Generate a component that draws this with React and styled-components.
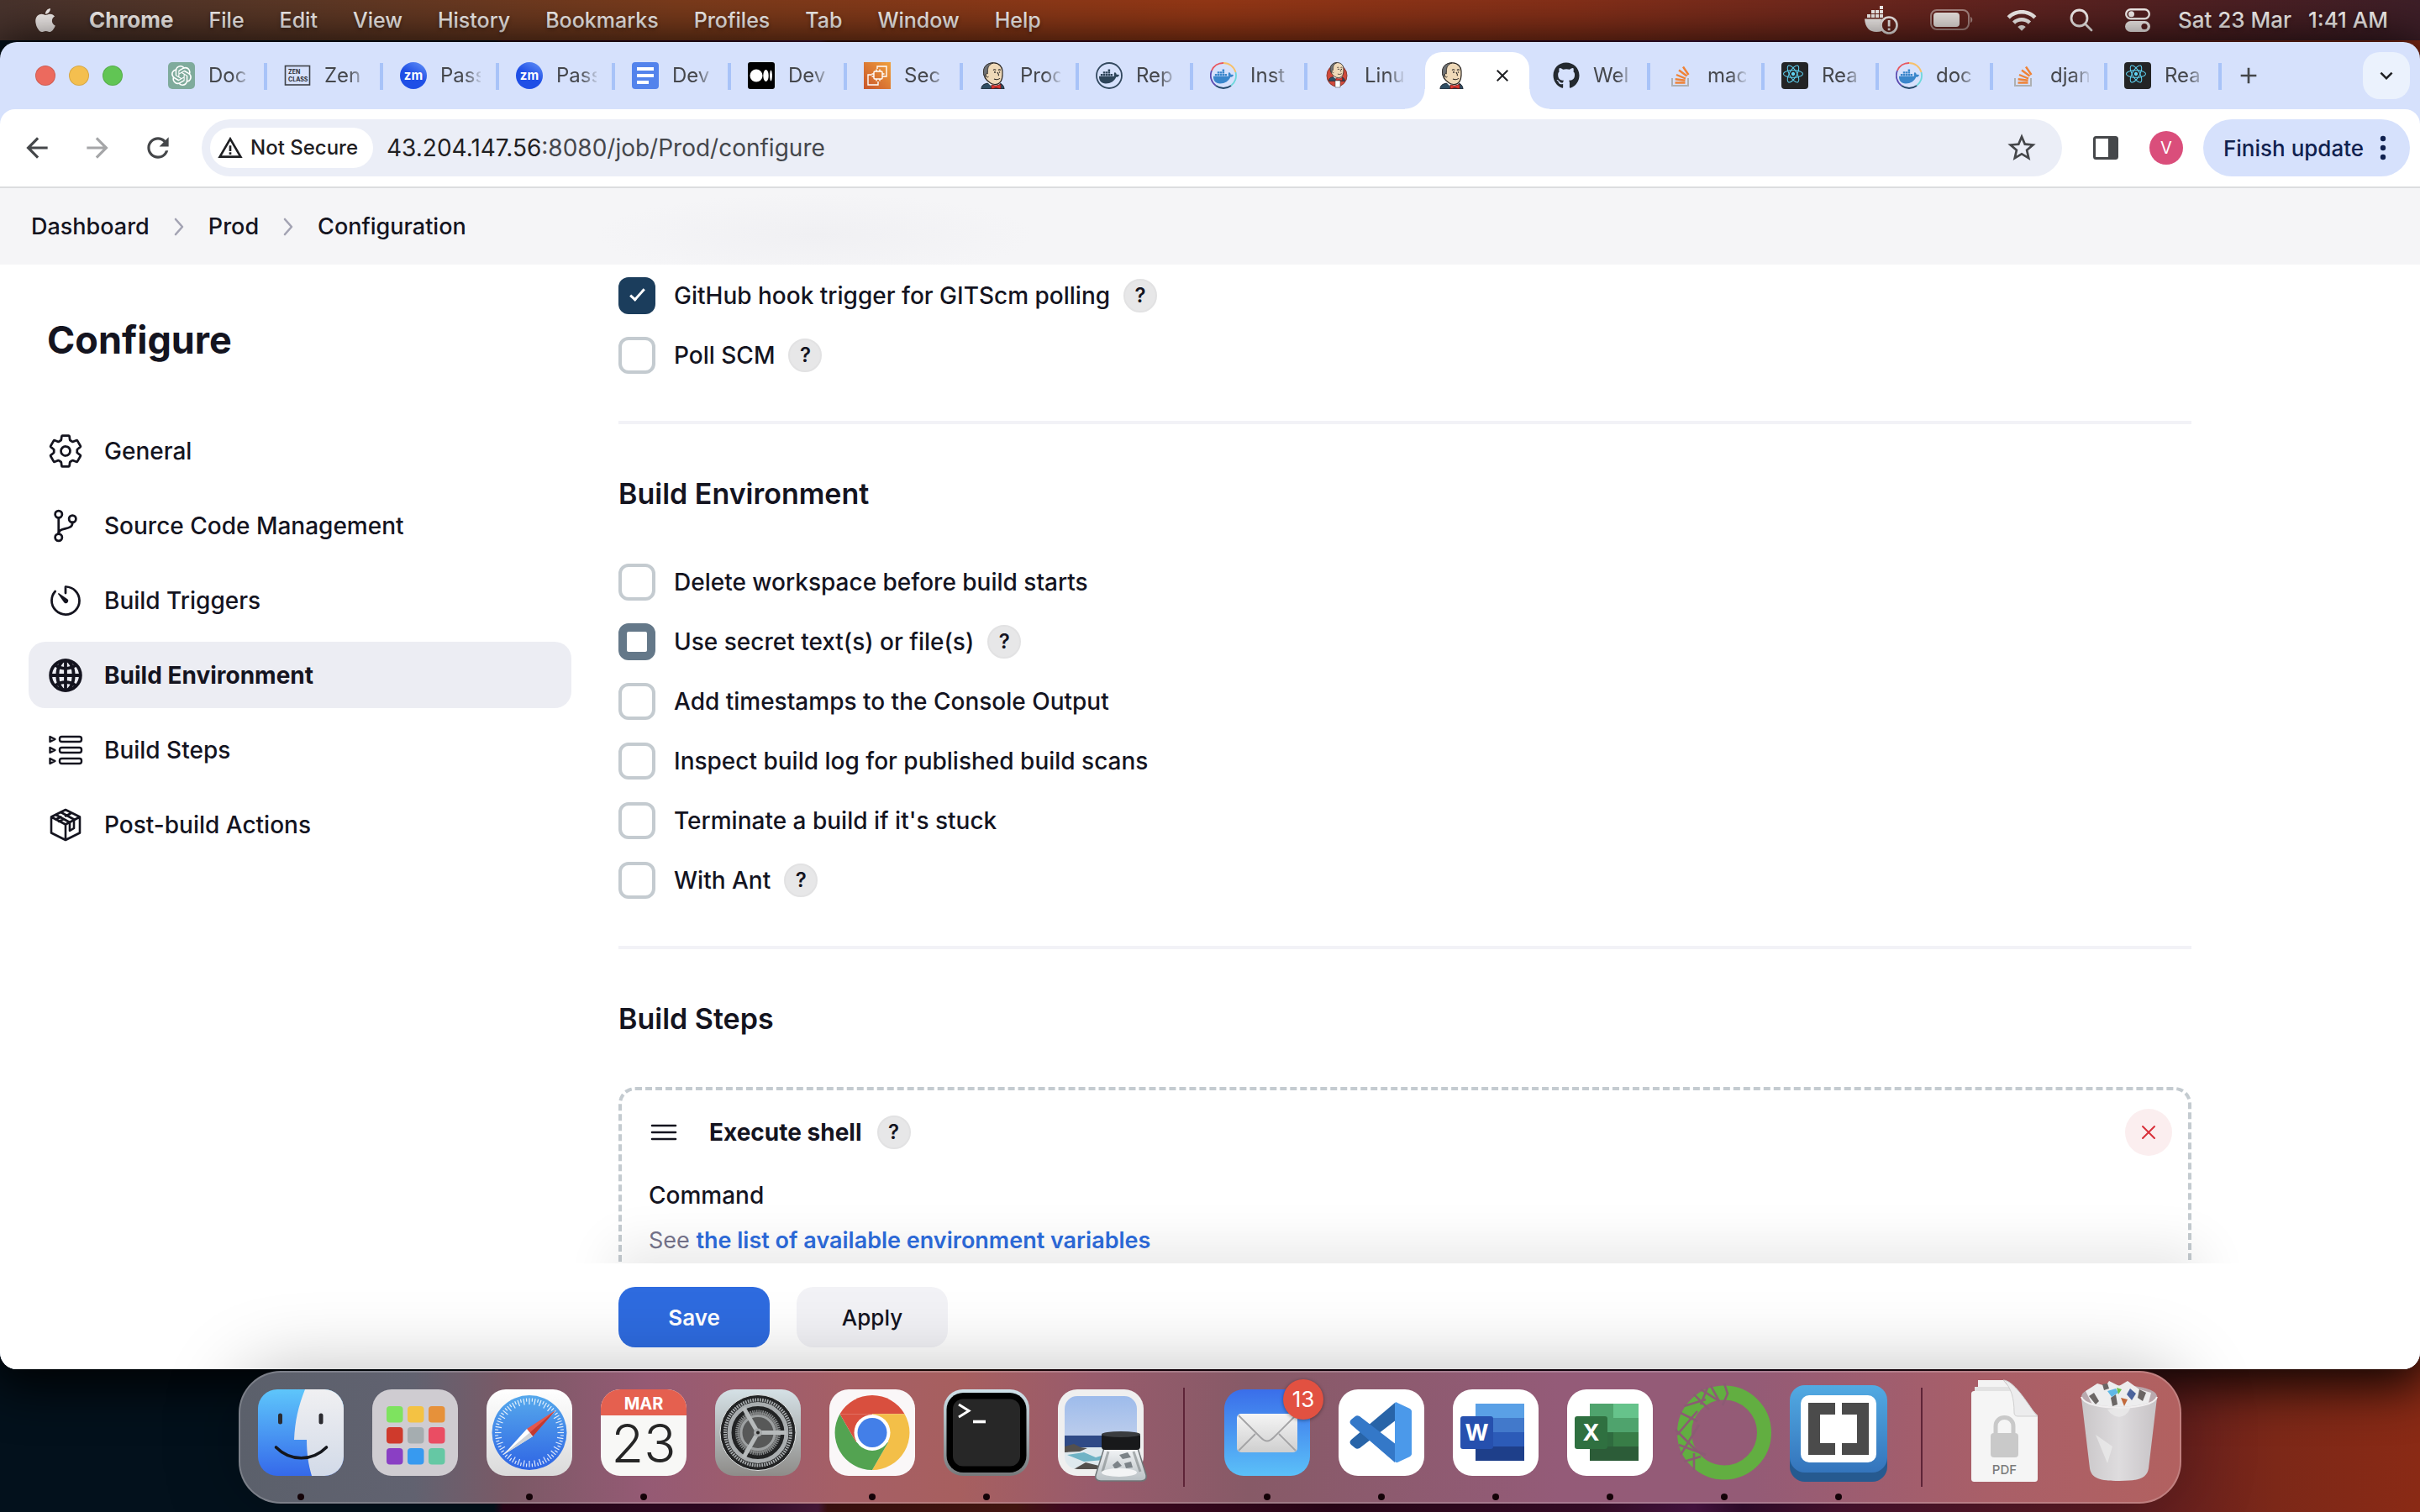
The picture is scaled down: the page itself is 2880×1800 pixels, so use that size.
import React from "react";
import styled, { createGlobalStyle, css } from "styled-components";
import { FaApple, FaGithub, FaDocker, FaReact } from "react-icons/fa";
import { SiOpenai } from "react-icons/si";
import { MdArrowBack, MdArrowForward, MdRefresh, MdStarBorder, MdAdd, MdClose, MdWifi, MdKeyboardArrowDown, MdWarningAmber } from "react-icons/md";
import { IoSettingsOutline, IoGitBranchOutline, IoTimerOutline, IoGlobeOutline } from "react-icons/io5";

const ink = "#14141f";
const sans = `Inter, "Liberation Sans", sans-serif`;

const GlobalStyle = createGlobalStyle`
  *, *::before, *::after { box-sizing: border-box; }
  body { margin: 0; font-family: ${sans}; color: ${ink}; background: #03111c; }
  button, input { font: inherit; color: inherit; margin: 0; }
  button { border: 0; padding: 0; background: none; cursor: pointer; }
  a { color: inherit; text-decoration: none; }
  h1, h2, h3, p, ul, ol { margin: 0; padding: 0; }
  ul, ol { list-style: none; }
  svg { display: block; flex: none; }
`;

/* ---------- desktop and menu bar ---------- */

const Desktop = styled.div`
  display: flex;
  flex-direction: column;
  height: 100vh;
  padding-bottom: 10px;
  overflow: hidden;
  background:
    linear-gradient(90deg, #03111c 0%, #03111c 20.4%, #2a0419 20.8%, #330a26 30%, #4b1a3d 33.8%, #3f1210 34.2%, #4a1812 42%, #480a25 44%, #2c0519 55%, #3a0d2a 66%, #4a1545 70%, #330c2e 72%, #4b1230 76%, #601d22 88%, #7c2818 94%, #8a2a15 100%);
`;

const MenuBar = styled.header`
  display: flex;
  align-items: center;
  flex: none;
  height: 48px;
  margin-bottom: 2px;
  padding: 0 38px;
  font-size: 26px;
  line-height: 32px;
  font-weight: 500;
  color: #fbf6f4;
  text-shadow: 0 2px 4px rgba(0, 0, 0, 0.35);
  background: linear-gradient(90deg, #48332d 0%, #5c3826 12%, #7c3c1c 28%, #963816 50%, #863019 65%, #67251f 80%, #4d2023 92%, #3e1f28 100%);
`;

const MenuList = styled.nav`
  display: flex;
  align-items: center;
  gap: 42px;
  margin-left: 36px;
  font-size: 25px;
  strong { font-size: 26px; font-weight: 700; }
`;

const StatusList = styled.div`
  display: flex;
  align-items: center;
  gap: 38px;
  margin-left: auto;
`;

const Clock = styled.time`
  display: flex;
  gap: 20px;
  margin-left: -5px;
`;

/* ---------- browser window ---------- */

const Browser = styled.section`
  display: flex;
  flex-direction: column;
  flex: 1;
  min-height: 0;
  margin-bottom: 2px;
  border-radius: 20px;
  overflow: hidden;
  background: #d6e1fc;
  box-shadow: 0 10px 60px 10px rgba(0, 0, 0, 0.9);
`;

const TabStrip = styled.div`
  display: flex;
  align-items: flex-end;
  flex: none;
  height: 80px;
  padding: 0 12px 0 42px;
`;

const Lights = styled.div`
  display: flex;
  align-items: center;
  gap: 16px;
  height: 80px;
  width: 138px;
  flex: none;
`;

const Light = styled.span`
  width: 24px;
  height: 24px;
  border-radius: 50%;
  border: 1px solid rgba(0, 0, 0, 0.12);
  background: ${(p) => p.$color};
`;

const Tab = styled.a`
  display: flex;
  align-items: center;
  gap: 16px;
  flex: none;
  width: ${(p) => (p.$wide ? 138 : 136)}px;
  height: 80px;
  padding: 0 22px 0 20px;
  font-size: 24px;
  line-height: 32px;
  color: #45474c;
  background: ${(p) => (p.$last ? "none" : "linear-gradient(#a8c3f8, #a8c3f8) no-repeat right 25px / 4px 32px")};
  background-size: 4px 32px;
`;

const TabLabel = styled.span`
  flex: 1;
  min-width: 0;
  overflow: hidden;
  white-space: nowrap;
  -webkit-mask-image: linear-gradient(90deg, #000 60%, rgba(0, 0, 0, 0.15) 100%);
  mask-image: linear-gradient(90deg, #000 60%, rgba(0, 0, 0, 0.15) 100%);
`;

const ActiveTab = styled.div`
  position: relative;
  display: flex;
  align-items: center;
  justify-content: space-between;
  flex: none;
  width: 124px;
  height: 68px;
  margin: 0 8px 0 4px;
  padding: 0 20px 12px 16px;
  border-radius: 20px 20px 0 0;
  background: #fff;
  &::before, &::after {
    content: "";
    position: absolute;
    bottom: 0;
    width: 24px;
    height: 24px;
  }
  &::before { right: 100%; background: radial-gradient(circle at 0 0, transparent 23px, #fff 24px); }
  &::after { left: 100%; background: radial-gradient(circle at 100% 0, transparent 23px, #fff 24px); }
`;

const IconButton = styled.button`
  display: grid;
  place-items: center;
  width: ${(p) => p.$size || 40}px;
  height: ${(p) => p.$size || 40}px;
  flex: none;
  color: ${(p) => p.$color || "#45474a"};
`;

const NewTabButton = styled(IconButton)`
  width: 64px;
  height: 80px;
`;

const TabSearch = styled(IconButton)`
  width: 56px;
  height: 56px;
  margin: 0 0 12px auto;
  border-radius: 20px;
  color: #1f2023;
  background: #ebf2fd;
`;

const Toolbar = styled.div`
  display: flex;
  align-items: center;
  flex: none;
  height: 94px;
  padding: 0 12px 0 24px;
  border-radius: 18px 18px 0 0;
  border-bottom: 2px solid #dcdddf;
  background: #fff;
`;

const NavButtons = styled.div`
  display: flex;
  gap: 32px;
  margin-right: 32px;
`;

const Address = styled.div`
  display: flex;
  align-items: center;
  flex: 1;
  height: 68px;
  margin-right: 32px;
  padding: 0 28px 0 10px;
  border-radius: 34px;
  background: #ebeef7;
`;

const SecurityChip = styled.button`
  display: flex;
  align-items: center;
  gap: 8px;
  height: 48px;
  padding: 0 18px 0 8px;
  border-radius: 24px;
  background: #fff;
  color: #1f2023;
  font-size: 24px;
  line-height: 32px;
  font-weight: 500;
`;

const Url = styled.span`
  flex: 1;
  margin-left: 16px;
  font-size: 28px;
  line-height: 36px;
  color: #45474c;
  b { font-weight: 400; color: #1f2023; }
`;

const Avatar = styled.button`
  width: 40px;
  height: 40px;
  margin: 0 24px 0 32px;
  border-radius: 50%;
  background: #da4e7b;
  color: #fff;
  font-size: 20px;
`;

const UpdateButton = styled.button`
  display: flex;
  align-items: center;
  justify-content: space-between;
  width: 246px;
  height: 68px;
  padding: 0 28px 0 24px;
  border-radius: 34px;
  background: #d6e1fc;
  color: #10214f;
  font-size: 26px;
  font-weight: 500;
  white-space: nowrap;
`;

/* ---------- Jenkins page ---------- */

const Breadcrumbs = styled.nav`
  display: flex;
  align-items: center;
  flex: none;
  gap: 29px;
  height: 91px;
  padding: 0 37px;
  font-size: 27px;
  line-height: 36px;
  font-weight: 500;
  background:
    radial-gradient(ellipse 260px 50px at 970px 56px, #f0f0f3 0%, rgba(240, 240, 243, 0) 100%),
    #f5f5f7;
`;

const Page = styled.div`
  position: relative;
  display: grid;
  grid-template-columns: 646px minmax(0, 1fr);
  column-gap: 56px;
  flex: 1;
  min-height: 0;
  overflow: hidden;
  padding: 0 272px 0 34px;
  background: #fff;
  &::after {
    content: "";
    position: absolute;
    left: 750px;
    right: 280px;
    top: 100%;
    height: 40px;
    box-shadow: 0 0 60px 20px rgba(0, 0, 0, 0.09);
  }
`;

const Sidebar = styled.aside`
  padding-top: 60px;
`;

const PageTitle = styled.h1`
  padding-left: 22px;
  margin-bottom: 62px;
  font-size: 45px;
  line-height: 60px;
  font-weight: 700;
`;

const SideList = styled.ul`
  display: grid;
  gap: 10px;
`;

const SideLink = styled.a`
  display: flex;
  align-items: center;
  gap: 24px;
  height: 79px;
  padding: 0 22px;
  border-radius: 20px;
  font-size: 28px;
  line-height: 36px;
  font-weight: 500;
  ${(p) => p.$active && css`
    font-weight: 700;
    background: #ecedf3;
    svg * { stroke-width: 44px; }
  `}
`;

const Content = styled.main`
  display: flex;
  flex-direction: column;
  min-width: 0;
`;

const Section = styled.section`
  padding: ${(p) => (p.$first ? "1px 0 43px" : "59px 0 43px")};
  & + & { border-top: 4px solid #f2f2f7; }
`;

const SectionTitle = styled.h2`
  margin-bottom: 45px;
  font-size: 34px;
  line-height: 48px;
  font-weight: 600;
`;

const OptionRow = styled.div`
  display: flex;
  align-items: center;
  height: 71px;
`;

const OptionLabel = styled.label`
  display: flex;
  align-items: center;
  gap: 22px;
  margin-right: 16px;
  font-size: 28px;
  line-height: 36px;
  font-weight: 500;
  cursor: pointer;
`;

const Box = styled.input.attrs({ type: "checkbox" })`
  appearance: none;
  width: 44px;
  height: 44px;
  flex: none;
  border-radius: 12px;
  border: 4px solid #c4cbd0;
  background: #fff;
  ${(p) => p.$pressed && css`
    border: 10px solid #647889;
  `}
  &:checked {
    border: 0;
    background: #1b3d5c;
    display: grid;
    place-items: center;
  }
  &:checked::after {
    content: "";
    width: 9px;
    height: 18px;
    margin-bottom: 6px;
    border: solid #fff;
    border-width: 0 3px 3px 0;
    transform: rotate(42deg);
  }
`;

const Help = styled.button`
  width: 40px;
  height: 40px;
  flex: none;
  border-radius: 50%;
  border: 2px solid #e2e2e3;
  background: #e7e7e8;
  font-size: 24px;
  line-height: 36px;
  font-weight: 600;
`;

const StepCard = styled.article`
  height: 400px;
  margin-top: 57px;
  padding: 20px 19px 0 32px;
  border: 4px dashed #c4cbd0;
  border-radius: 20px;
`;

const StepHead = styled.div`
  display: flex;
  align-items: center;
  height: 60px;
  padding-left: 2px;
  h3 {
    margin: 0 18px 0 38px;
    font-size: 28px;
    line-height: 36px;
    font-weight: 700;
  }
`;

const RemoveButton = styled.button`
  display: grid;
  place-items: center;
  width: 56px;
  height: 56px;
  margin-left: auto;
  border-radius: 50%;
  background: #fbeeef;
`;

const FieldLabel = styled.p`
  margin-top: 27px;
  font-size: 28px;
  line-height: 36px;
  font-weight: 500;
`;

const FieldHint = styled.p`
  margin-top: 18px;
  font-size: 27px;
  line-height: 36px;
  color: #76748c;
  a { color: #2d6cdd; font-weight: 600; }
`;

const ActionBar = styled.footer`
  display: flex;
  align-items: flex-start;
  gap: 32px;
  flex: none;
  height: 126px;
  padding: 28px 272px 0 736px;
  background: #fff;
`;

const ActionButton = styled.button`
  width: 180px;
  height: 72px;
  border-radius: 20px;
  font-size: 26px;
  font-weight: ${(p) => (p.$primary ? 600 : 500)};
  color: ${(p) => (p.$primary ? "#fff" : ink)};
  background: ${(p) => (p.$primary ? "#2e6bdf" : "#f2f2f6")};
`;

/* ---------- dock ---------- */

const Dock = styled.nav`
  position: relative;
  display: flex;
  flex: none;
  align-self: center;
  height: 158px;
  padding: 0 4px;
  border: 2px solid rgba(255, 255, 255, 0.2);
  border-radius: 50px;
  background: linear-gradient(90deg, #5b606b 0%, #616270 9%, #7b5966 14%, #955a74 21%, #a55f66 31%, #a75f5f 37%, #985b6c 44%, #875a67 52%, #945b78 68%, #945b76 78%, #a95f68 90%, #b26160 100%);
  background-origin: border-box;
  box-shadow: 0 0 90px rgba(0, 0, 0, 0.26);
`;

const DockItem = styled.button`
  position: relative;
  display: flex;
  justify-content: center;
  width: 136px;
  padding-top: 14px;
  &::after {
    content: "";
    display: ${(p) => (p.$running ? "block" : "none")};
    position: absolute;
    left: 64px;
    bottom: 2px;
    width: 8px;
    height: 8px;
    border-radius: 50%;
    background: #140308;
  }
`;

const DockRule = styled.span`
  width: 2px;
  height: 118px;
  margin: 18px 30px 0;
  background: #5e2438;
`;

const Badge = styled.span`
  position: absolute;
  left: 87px;
  top: 8px;
  width: 48px;
  height: 48px;
  border-radius: 50%;
  background: #e25141;
  color: #fff;
  font-size: 26px;
  line-height: 48px;
  box-shadow: 0 1px 4px rgba(0, 0, 0, 0.4);
`;

/* ---------- favicons ---------- */

const Fav = ({ children, box = "0 0 32 32", size = 32 }) => (
  <svg width={size} height={size} viewBox={box} aria-hidden="true">{children}</svg>
);

const OpenAiFav = () => (
  <Fav><rect width="32" height="32" rx="5" fill="#7fab9c" /><SiOpenai x="4" y="4" width="24" height="24" color="#fff" /></Fav>
);
const ZenFav = () => (
  <Fav>
    <rect x="1.500" y="4.500" width="29" height="22.500" fill="none" stroke="#3f4248" strokeWidth="1.600" />
    <text x="5" y="13.500" fontSize="7" fontWeight="700" fontFamily="Inter, sans-serif" fill="#2c2e33">ZEN</text>
    <text x="5" y="23" fontSize="7" fontWeight="700" fontFamily="Inter, sans-serif" fill="#2c2e33">CLASS</text>
  </Fav>
);
const ZoomFav = () => (
  <Fav>
    <defs><linearGradient id="zm" x1="0.2" y1="1" x2="0.8" y2="0"><stop offset="0.5" stopColor="#1f4fe6" /><stop offset="1" stopColor="#5b8af5" /></linearGradient></defs>
    <circle cx="16" cy="16" r="16" fill="url(#zm)" />
    <text x="16" y="20.500" textAnchor="middle" fontSize="15" fontWeight="700" fontFamily="Inter, sans-serif" fill="#fff">zm</text>
  </Fav>
);
const DocsFav = () => (
  <Fav><rect width="32" height="32" rx="4" fill="#5383ec" /><path d="M6 6h20v4H6zM6 14h20v4H6zM6 22h14v4H6z" fill="#fff" /></Fav>
);
const MediumFav = () => (
  <Fav><rect width="32" height="32" rx="3" fill="#000" /><ellipse cx="10" cy="16" rx="7.500" ry="7.500" fill="#fff" /><ellipse cx="21.500" cy="16" rx="3.200" ry="7" fill="#fff" /><ellipse cx="27.500" cy="16" rx="1.400" ry="6.500" fill="#fff" /></Fav>
);
const AwsFav = () => (
  <Fav>
    <defs><linearGradient id="aw" x1="0" y1="1" x2="1" y2="0"><stop offset="0" stopColor="#c8552b" /><stop offset="1" stopColor="#f0a03c" /></linearGradient></defs>
    <rect width="32" height="32" fill="url(#aw)" />
    <g fill="none" stroke="#fff" strokeWidth="1.400">
      <rect x="12" y="11" width="10" height="9" rx="1" />
      <path d="M15 8.500v2.500M19 8.500v2.500M15 20v2.500M19 20v2.500M9.500 14h2.500M9.500 17h2.500M22 14h2.500M22 17h2.500M16 8V5h11v12h-2.500M9.500 15H5v12h12v-4" />
    </g>
  </Fav>
);
const JenkinsFav = ({ red }) => (
  <Fav>
    {red && <ellipse cx="15" cy="16" rx="12" ry="13" fill="#d0493b" stroke="#8f3a30" />}
    <g transform={red ? "translate(4 0) scale(0.7)" : undefined}>
      <path d="M2 32c0-4 2-6 8-7h14c3 1 5 4 5 7z" fill="#2f4d63" stroke="#1b2430" />
      <path d="M9 24l5 5h8l3-5z" fill="#fff" />
      <path d="M5 10C6 3 12 .6 17 .8c6 .3 10 5 10 10 .3 5 .3 11-3.500 14-3 2.400-8 2.200-11 0C8 22 4 17 5 10z" fill="#efd9b8" stroke="#2c2724" strokeWidth="1.200" />
      <path d="M4.500 12C4 5 9 1 16 .8 11 3 9.500 6 9.500 9.500L9 16l-2.500 1.500C4.500 16 4.600 14 4.500 12z" fill="#6d7074" stroke="#2c2724" strokeWidth=".8" />
      <path d="M9.500 13.500c-2-.6-2.800 1-2 2.800s2 2 3 1" fill="#efd9b8" stroke="#2c2724" />
      <path d="M16 9.500c1-.9 2.200-.9 3.200 0M22 9.500c.8-.8 2-.8 2.800 0M21 12c.6 2 2.600 2.600 1 4.200M17 20c2.500 1.200 5 .8 7-.6" fill="none" stroke="#2c2724" strokeWidth="1.100" />
      <circle cx="18" cy="12" r=".9" fill="#231f20" /><circle cx="23.500" cy="12" r=".8" fill="#231f20" />
      <path d="M14 27l5 1.200 6-1.800v5.200l-6-1.200-5 1.600z" fill="#e03a34" stroke="#6b1713" strokeWidth=".8" />
    </g>
    {red && <path d="M13 22h6v8h-6z" fill="#fff" stroke="#555" strokeWidth=".6" />}
  </Fav>
);
const DockerFav = ({ color }) => (
  <Fav>
    {color ? (
      <g fill="none" strokeWidth="1.800">
        <path d="M16 1a15 15 0 0 0-14 9" stroke="#e8575f" />
        <path d="M16 1a15 15 0 0 1 14.500 11" stroke="#f7c069" />
        <path d="M2 10a15 15 0 0 0 5 18" stroke="#5c4bb0" />
        <path d="M30.500 12A15 15 0 0 1 25 28" stroke="#6fd8dc" />
        <path d="M7 28a15 15 0 0 0 18 0" stroke="#25496b" />
      </g>
    ) : <circle cx="16" cy="16" r="15" fill="none" stroke="#33495f" strokeWidth="1.800" />}
    <FaDocker x="4" y="5" width="25" height="21" color={color ? "#3a86cb" : "#2d4459"} />
  </Fav>
);
const GithubFav = () => <FaGithub size={32} color="#24292f" />;
const StackFav = () => (
  <Fav><path d="M6 19v9h19V19" fill="none" stroke="#aeb0b3" strokeWidth="2" /><g stroke="#ef8236" strokeWidth="2.400"><path d="M9.500 24.500h12M9.700 20.300l11.800 1.500M11 15l11 4.500M14 9.500l9.500 7M19 5.500l6.500 9.500" /></g></Fav>
);
const ReactFav = () => (
  <Fav><rect width="32" height="32" rx="4" fill="#232425" /><FaReact x="2" y="2" width="28" height="28" color="#5fd3f3" /></Fav>
);

const tabsBefore = [
  ["Doc", <OpenAiFav />, true], ["Zen", <ZenFav />, true], ["Pass", <ZoomFav />, true],
  ["Pass", <ZoomFav />, true], ["Dev", <DocsFav />, true], ["Dev", <MediumFav />, true],
  ["Sec", <AwsFav />, true], ["Prod", <JenkinsFav />, true], ["Rep", <DockerFav />],
  ["Inst", <DockerFav color />], ["Linu", <JenkinsFav red />],
];
const tabsAfter = [
  ["Wel", <GithubFav />], ["mac", <StackFav />], ["Rea", <ReactFav />],
  ["doc", <DockerFav color />], ["djan", <StackFav />], ["Rea", <ReactFav />],
];

/* ---------- page icons ---------- */

const StepsIcon = () => (
  <svg width="44" height="44" viewBox="-2 -2 44 44" fill="none" stroke="currentColor" strokeWidth="2.400" strokeLinejoin="round">
    {[7, 20, 33].map((y) => (
      <g key={y}><path d={`M1.500 ${y - 3}l6 3-6 3z`} /><rect x="13" y={y - 3} width="26" height="6" rx="2.500" /></g>
    ))}
  </svg>
);

const PackageIcon = () => (
  <svg width="44" height="44" viewBox="-2 -2 44 44" fill="none" stroke="currentColor" strokeWidth="2.600" strokeLinejoin="round" strokeLinecap="round">
    <path d="M20 2L37 10.500V29.500L20 38 3 29.500V10.500zM3 10.500L20 19.500 37 10.500M20 19.500V38" />
    <path d="M8.500 8L25 17M14.500 5L31 14M25 17v10l5-3V14M12 16l6-3M8.500 13.500l6-3M20 9.500l6-3" />
  </svg>
);

const DragIcon = () => (
  <svg width="32" height="20" viewBox="0 0 32 20" stroke={ink} strokeWidth="2.600" strokeLinecap="round"><path d="M2 2h28M2 10h28M2 18h28" /></svg>
);

const RemoveIcon = () => (
  <svg width="18" height="18" viewBox="0 0 18 18" stroke="#d8303a" strokeWidth="2" strokeLinecap="round"><path d="M2 2l14 14M16 2L2 16" /></svg>
);

const Chevron = () => (
  <svg width="12" height="22" viewBox="0 0 12 22" fill="none" stroke="#a3a3b3" strokeWidth="2.600" strokeLinecap="round" strokeLinejoin="round"><path d="M2 2l8 9-8 9" /></svg>
);

const PanelIcon = () => (
  <svg width="30" height="30" viewBox="0 0 30 30"><rect x="1.500" y="2.500" width="27" height="25" rx="2" fill="none" stroke="#45474a" strokeWidth="3" /><path d="M18 2h9.500v26H18z" fill="#45474a" /></svg>
);

const DotsIcon = () => (
  <svg width="8" height="30" viewBox="0 0 8 30" fill="currentColor"><circle cx="4" cy="4" r="3.200" /><circle cx="4" cy="15" r="3.200" /><circle cx="4" cy="26" r="3.200" /></svg>
);

const DockerStatus = () => (
  <svg width="40" height="34" viewBox="0 0 40 34" fill="currentColor">
    <path d="M18 0h4v4h-4zM8 5h4v4H8zM13 5h4v4h-4zM18 5h4v4h-4zM3 10h4v4H3zM8 10h4v4H8zM13 10h4v4h-4zM18 10h4v4h-4zM0 15.500h21c-3 4-3 10 0 14.500-12 3-20-1-21-14.500z" />
    <circle cx="29" cy="23" r="9.500" fill="none" stroke="currentColor" strokeWidth="2.600" /><path d="M27.700 17h2.800v7.500h-2.800zM27.700 26.500h2.800v2.800h-2.800z" />
  </svg>
);

const BatteryIcon = () => (
  <svg width="52" height="26" viewBox="0 0 52 26"><rect x="1" y="1" width="45" height="23" rx="7" fill="none" stroke="#f2ebe7" strokeOpacity=".5" strokeWidth="2" /><rect x="4" y="4" width="31" height="17" rx="4" fill="#f2ebe7" /><path d="M48 9c3 1 3 6 0 7z" fill="#f2ebe7" fillOpacity=".5" /></svg>
);

const SearchIcon = () => (
  <svg width="28" height="28" viewBox="0 0 28 28" fill="none" stroke="currentColor" strokeWidth="2.800" strokeLinecap="round"><circle cx="11.500" cy="11.500" r="9.500" /><path d="M18.500 18.500l7.500 7.500" /></svg>
);

const ControlIcon = () => (
  <svg width="30" height="28" viewBox="0 0 30 28"><rect x="1.200" y="1.200" width="27.600" height="11" rx="5.500" fill="none" stroke="currentColor" strokeWidth="2.400" /><circle cx="7.500" cy="6.700" r="3.500" fill="currentColor" /><rect y="15" width="30" height="13" rx="6.500" fill="currentColor" /><circle cx="23" cy="21.500" r="3.600" fill="#5a2323" /></svg>
);

/* ---------- dock drawings, each on a 120-unit square ---------- */

const Art = ({ children }) => <svg width="120" height="124" viewBox="0 0 120 124" overflow="visible" aria-hidden="true">{children}</svg>;
const Grad = ({ id, from, to }) => (
  <linearGradient id={id} x1="0" y1="0" x2="0" y2="1"><stop offset="0" stopColor={from} /><stop offset="1" stopColor={to} /></linearGradient>
);
const Tile = ({ fill }) => <rect x="9" y="6" width="102" height="103" rx="23" fill={fill} />;

const FinderArt = () => (
  <Art>
    <defs><Grad id="f1" from="#5ec6fb" to="#3569ea" /><Grad id="f2" from="#f0f0f2" to="#d2dae8" /><clipPath id="fc"><rect x="9" y="6" width="102" height="103" rx="23" /></clipPath></defs>
    <Tile fill="url(#f1)" />
    <path clipPath="url(#fc)" d="M65 6C57 26 53 44 52 66h15c0 16 2 30 6 43h38V6z" fill="url(#f2)" />
    <path d="M35.500 37v8M84 37v8" stroke="#2b2b30" strokeWidth="5" strokeLinecap="round" />
    <path d="M30.500 75c17 17 43 17 60 0" fill="none" stroke="#14161c" strokeWidth="3.600" strokeLinecap="round" />
  </Art>
);

const padColors = ["#7ee35f", "#f4c243", "#e6913a", "#cf3a2c", "#a5adb0", "#ea4d63", "#8a3fc4", "#379af0", "#65c8a4"];
const LaunchpadArt = () => (
  <Art>
    <Tile fill="#cfccd1" />
    {padColors.map((c, i) => <rect key={c} x={26 + (i % 3) * 25} y={26 + Math.floor(i / 3) * 25} width="19.500" height="19.500" rx="4" fill={c} />)}
  </Art>
);

const SafariArt = () => (
  <Art>
    <defs><Grad id="s1" from="#ffffff" to="#dadada" /><Grad id="s2" from="#56a9ec" to="#2f65e4" /></defs>
    <Tile fill="url(#s1)" />
    <circle cx="60" cy="57.500" r="44.500" fill="url(#s2)" />
    {Array.from({ length: 72 }, (_, i) => (
      <path key={i} d={i % 2 ? "M60 16.500v4" : "M60 16.500v7.500"} stroke="#fff" strokeOpacity=".85" strokeWidth="1.200" transform={`rotate(${i * 5} 60 57.500)`} />
    ))}
    <path d="M91 31L64 62 57 53z" fill="#e5574b" /><path d="M91 31L64 62 60.500 57.500z" fill="#c23a30" />
    <path d="M29 84L57 53l7 9z" fill="#fff" /><path d="M29 84L60.500 57.500 64 62z" fill="#cfd3d8" />
  </Art>
);

const CalendarArt = () => (
  <Art>
    <Tile fill="#f8f8f6" />
    <path d="M9 37V29A23 23 0 0 1 32 6h56a23 23 0 0 1 23 23v8z" fill="#e5604f" />
    <text x="60" y="30" textAnchor="middle" fontSize="20" fontWeight="700" fontFamily="Inter, sans-serif" fill="#fff">MAR</text>
    <text x="60" y="93" textAnchor="middle" fontSize="63" fontWeight="300" fontFamily="Inter, sans-serif" fill="#262626">23</text>
  </Art>
);

const SettingsArt = () => (
  <Art>
    <defs><Grad id="g1" from="#d5e1e6" to="#8e8c89" /></defs>
    <Tile fill="url(#g1)" />
    <circle cx="60" cy="57.500" r="45" fill="#222324" stroke="#dfe2e2" strokeWidth="1" />
    <circle cx="60" cy="57.500" r="39" fill="none" stroke="#a9adaf" strokeWidth="4" strokeDasharray="1.700 1.200" />
    <circle cx="60" cy="57.500" r="34" fill="none" stroke="#a9adaf" strokeWidth="5" />
    <circle cx="60" cy="57.500" r="24.500" fill="#6a6b6b" stroke="#898c8d" strokeWidth="5" strokeDasharray="1.400 1" />
    <circle cx="60" cy="57.500" r="20" fill="#575858" stroke="#9da0a1" strokeWidth="3" />
    {[0, 120, 240].map((a) => <path key={a} d="M60 57.500H94" stroke="#b6babb" strokeWidth="5" transform={`rotate(${a} 60 57.500)`} />)}
    <circle cx="60" cy="57.500" r="5" fill="#a4a7a8" /><circle cx="60" cy="57.500" r="2" fill="#222" />
  </Art>
);

const ChromeArt = () => (
  <Art>
    <Tile fill="#faf7f8" />
    <g transform="translate(60 57.500)">
      <path d="M-38.500-22.250A44.500 44.500 0 0 1 38.500-22.250H0z" fill="#d94f3e" />
      <path d="M38.500-22.250A44.500 44.500 0 0 1 0 44.500L19.300 11.100 0-22.250z" fill="#f3bf48" />
      <path d="M0 44.500A44.500 44.500 0 0 1-38.500-22.250L-19.300 11.100 0 20l19.300-8.900z" fill="#53a351" />
      <path d="M-38.500-22.250L-19.300 11.100 0 0V-22.250z" fill="#d94f3e" />
      <circle r="21.500" fill="#fff" /><circle r="17.500" fill="#437fe8" />
    </g>
  </Art>
);

const TerminalArt = () => (
  <Art>
    <defs><Grad id="t1" from="#cfe2ea" to="#77797b" /></defs>
    <Tile fill="url(#t1)" />
    <rect x="12.500" y="10" width="95" height="95" rx="20" fill="#000" />
    <rect x="20" y="17.500" width="80" height="80" rx="12" fill="#272727" />
    <path d="M27 24l12 7.500-12 7.500" fill="none" stroke="#fff" strokeWidth="3" /><path d="M44 44.500h15" stroke="#fff" strokeWidth="3.600" />
  </Art>
);

const PreviewArt = () => (
  <Art>
    <defs><Grad id="p1" from="#9dbbeb" to="#bccdec" /><Grad id="p2" from="#f4f6f8" to="#b9c0c4" /></defs>
    <Tile fill="#efefef" />
    <clipPath id="pc"><rect x="17" y="14" width="86" height="87" rx="15" /></clipPath>
    <g clipPath="url(#pc)">
      <path d="M17 14h86v48H17z" fill="url(#p1)" /><path d="M17 61h86v14H17z" fill="#2f4a86" /><path d="M17 75h86v27H17z" fill="#dfe9ee" />
      <path d="M17 74l11-3 8 4 8 1-9 4-18 1zM28 101l14-8 20 5v5H28z" fill="#54504d" /><path d="M20 84l20-3 14 6 10-3v6l-24 2z" fill="#6fb3c5" />
    </g>
    <path d="M64 76h40l10 32c1 5-2 7-6 7H60c-5 0-7-3-6-7z" fill="url(#p2)" stroke="#6f7477" strokeWidth="1.500" />
    <path d="M69 80l-7 24M99 80l8 24" stroke="#7d8386" strokeWidth="3" fill="none" strokeOpacity=".6" />
    <path d="M82 84l10-3 4 6-10 2zM74 96l6-5 5 6-8 4zM88 94l8-2 2 7-8 1z" fill="#7c8388" />
    <ellipse cx="82" cy="105" rx="21" ry="5" fill="#f3f4f5" />
    <rect x="61" y="58" width="46" height="20" rx="4" fill="#18191b" /><ellipse cx="84" cy="59.500" rx="23" ry="3.500" fill="#3a3c3f" />
  </Art>
);

const MailArt = () => (
  <Art>
    <defs><Grad id="m1" from="#3a6eea" to="#5bc0f8" /><Grad id="m2" from="#f5f5f5" to="#cfcfcf" /></defs>
    <Tile fill="url(#m1)" />
    <rect x="24" y="35" width="72" height="46" rx="5" fill="url(#m2)" />
    <path d="M26 79l20-20M94 79L74 59M26 37l26 26c6 6 10 6 16 0l26-26" fill="none" stroke="#a3a3a5" strokeWidth="1.800" />
  </Art>
);

const CodeArt = () => (
  <Art>
    <Tile fill="#fff" />
    <path d="M76 22L24 66c-2 2-2 4 0 6l5 4c1 1 3 1 5 0L78 42z" fill="#2864a8" />
    <path d="M76 93L24 48c-2-2-2-4 0-6l5-4c1-1 3-1 5 0L78 72z" fill="#3478c8" />
    <path d="M76 22c1-1 2-1 3 0l15 7c1 1 2 2 2 3v51c0 1-1 2-2 3l-15 7c-1 0-2 0-3-1z" fill="#4b99ea" />
  </Art>
);

const officeBands = {
  W: { left: ["#5aa0e6", "#4279cb", "#2c5bb8", "#1e3f8a"], right: ["#5aa0e6", "#4279cb", "#2c5bb8", "#1e3f8a"], plate: "#2650ae" },
  X: { left: ["#4fa36d", "#4fa36d", "#2f6b3f", "#2c5c38"], right: ["#66c38b", "#4fa36d", "#387d47", "#2c5c38"], plate: "#2f7040" },
};
const OfficeArt = ({ letter }) => {
  const look = officeBands[letter];
  return (
    <Art>
      <Tile fill="#fff" />
      {look.left.map((c, i) => (
        <g key={i}><rect x="36" y={23 + i * 17} width="29" height="17" fill={c} /><rect x="64" y={23 + i * 17} width="30" height="17" fill={look.right[i]} /></g>
      ))}
      <rect x="18" y="38" width="39" height="39" rx="3" fill={look.plate} />
      <text x="37.500" y="67" textAnchor="middle" fontSize="27" fontWeight="700" fontFamily="Inter, sans-serif" fill="#fff">{letter}</text>
    </Art>
  );
};

const AnacondaArt = () => (
  <Art>
    <circle cx="60" cy="57.500" r="47.500" fill="none" stroke="#62ae41" strokeWidth="17" />
    <g fill="none" stroke="#8c5b74" strokeWidth="2.600">
      <path d="M44 2l10 18M32 6l22 14M24 12l18 18M12 26l26-8M8 34l20 10M4 60l24-28M2 54l26 26M8 84l22-36M6 72l32 12M12 92l20-6M24 102V82M40 4l-8 20M60 -1l4 12-6 14" />
    </g>
  </Art>
);

const BracketsArt = () => (
  <Art>
    <defs><Grad id="b1" from="#52aae2" to="#3474bc" /></defs>
    <rect x="2" y="12" width="116" height="104" rx="18" fill="#265a90" />
    <rect x="2" y="1" width="116" height="104" rx="18" fill="url(#b1)" />
    <rect x="15" y="13" width="90" height="80" rx="10" fill="#fff" />
    <path d="M24 22h32v14H38v34h18v14H24zM64 22h32v62H64V70h18V36H64z" fill="#4b4b4b" />
  </Art>
);

const PdfArt = () => (
  <Art>
    <path d="M28-5h30l12 14v12H28z" fill="#f3f3f3" /><path d="M24 3h46v20H24z" fill="#e2e2e2" />
    <path d="M20 12c0-3 1-4 4-4h46L99 37v75c0 3-1 4-4 4H24c-3 0-4-1-4-4z" fill="#f5f5f5" />
    <path d="M58-5c12 0 28 26 38 40L99 38H76c-4 0-5-2-5-5C71 18 68 4 58-5z" fill="#ececed" stroke="#cfcfcf" />
    <rect x="43" y="58" width="33" height="29" rx="4" fill="#c9c9c9" /><path d="M49 60V50c0-14 21-14 21 0v10" fill="none" stroke="#c9c9c9" strokeWidth="5" />
    <text x="59.500" y="107" textAnchor="middle" fontSize="15" fontWeight="500" fontFamily="Inter, sans-serif" fill="#7b7b7b">PDF</text>
  </Art>
);

const TrashArt = () => (
  <Art>
    <defs><linearGradient id="w1"><stop offset="0" stopColor="#c9c6c8" /><stop offset=".5" stopColor="#dedcde" /><stop offset="1" stopColor="#c7c3c6" /></linearGradient></defs>
    <ellipse cx="60" cy="14" rx="45" ry="13" fill="#b9a9ae" />
    <path d="M20 8l14-9 10 3 4-6 12 6 10-6 14 10 14 4-4 16-30 8-32-2z" fill="#ededee" />
    <path d="M24 14l6-4 6 10-4 4zM40 0l6-1 2 6-6 2zM84 6l8 4-4 10-6-4zM50 16l6-4 2 12-6 2z" fill="#6b6665" /><path d="M46 8l10-3 3 5-8 5z" fill="#5fb8e6" /><path d="M57 4l6 2-4 6z" fill="#6ec24a" /><path d="M69 12l4-7 7 6-5 8z" fill="#4b639c" /><path d="M62 16l8 2-4 8z" fill="#c26a3c" />
    <path d="M15 16c12 14 78 14 90 0l-10 84c-2 12-12 15-35 15s-33-3-35-15z" fill="url(#w1)" />
    <path d="M15 15c4 17 86 17 90 0" fill="none" stroke="#f1eff0" strokeWidth="2" />
    <path d="M46 30c10 14 24 10 28-4zM32 60l20 14-6 20z" fill="#ececec" fillOpacity=".7" />
  </Art>
);

const dockLeft = [
  ["Finder", <FinderArt />, true], ["Launchpad", <LaunchpadArt />], ["Safari", <SafariArt />, true], ["Calendar", <CalendarArt />, true],
  ["System Settings", <SettingsArt />], ["Chrome", <ChromeArt />, true], ["Terminal", <TerminalArt />, true], ["Preview", <PreviewArt />],
];
const dockMiddle = [
  ["Mail", <MailArt />, true, "13"], ["VS Code", <CodeArt />, true], ["Word", <OfficeArt letter="W" />, true], ["Excel", <OfficeArt letter="X" />, true],
  ["Anaconda", <AnacondaArt />, true], ["Brackets", <BracketsArt />, true],
];
const dockRight = [["Documents", <PdfArt />], ["Trash", <TrashArt />]];

const DockGroup = ({ items }) => items.map(([name, art, running, badge]) => (
  <DockItem key={name} aria-label={name} $running={running}>
    {art}
    {badge && <Badge>{badge}</Badge>}
  </DockItem>
));

/* ---------- page content ---------- */

const sections = [
  ["General", <IoSettingsOutline size={44} />],
  ["Source Code Management", <IoGitBranchOutline size={44} />],
  ["Build Triggers", <IoTimerOutline size={44} />],
  ["Build Environment", <IoGlobeOutline size={44} />],
  ["Build Steps", <StepsIcon />],
  ["Post-build Actions", <PackageIcon />],
];

const environment = [
  { label: "Delete workspace before build starts" },
  { label: "Use secret text(s) or file(s)", help: true, pressed: true },
  { label: "Add timestamps to the Console Output" },
  { label: "Inspect build log for published build scans" },
  { label: "Terminate a build if it's stuck" },
  { label: "With Ant", help: true },
];

const Option = ({ label, help, checked, pressed }) => (
  <OptionRow>
    <OptionLabel><Box defaultChecked={checked} $pressed={pressed} />{label}</OptionLabel>
    {help && <Help aria-label={`Help for ${label}`}>?</Help>}
  </OptionRow>
);

const TabGroup = ({ tabs, lastRule }) => tabs.map(([label, icon, wide], i) => (
  <Tab key={i} href="#" $wide={wide} $last={!lastRule && i === tabs.length - 1}>
    {icon}
    <TabLabel>{label}</TabLabel>
  </Tab>
));

export default function App() {
  return (
    <Desktop>
      <GlobalStyle />
      <MenuBar>
        <FaApple size={32} />
        <MenuList>
          <strong>Chrome</strong>
          {["File", "Edit", "View", "History", "Bookmarks", "Profiles", "Tab", "Window", "Help"].map((m) => <span key={m}>{m}</span>)}
        </MenuList>
        <StatusList>
          <DockerStatus />
          <BatteryIcon />
          <MdWifi size={38} />
          <SearchIcon />
          <ControlIcon />
          <Clock><span>Sat 23 Mar</span><span>1:41 AM</span></Clock>
        </StatusList>
      </MenuBar>

      <Browser>
        <TabStrip>
          <Lights>
            <Light $color="#ec6a5e" /><Light $color="#f4bf4f" /><Light $color="#61c554" />
          </Lights>
          <TabGroup tabs={tabsBefore} />
          <ActiveTab>
            <JenkinsFav />
            <IconButton $size={24} $color="#1f2023" aria-label="Close tab"><MdClose size={24} /></IconButton>
          </ActiveTab>
          <TabGroup tabs={tabsAfter} lastRule />
          <NewTabButton aria-label="New tab"><MdAdd size={32} /></NewTabButton>
          <TabSearch aria-label="Search tabs"><MdKeyboardArrowDown size={30} /></TabSearch>
        </TabStrip>

        <Toolbar>
          <NavButtons>
            <IconButton aria-label="Back"><MdArrowBack size={38} /></IconButton>
            <IconButton aria-label="Forward" $color="#a5a6a8"><MdArrowForward size={38} /></IconButton>
            <IconButton aria-label="Reload"><MdRefresh size={38} /></IconButton>
          </NavButtons>
          <Address>
            <SecurityChip><MdWarningAmber size={32} />Not Secure</SecurityChip>
            <Url><b>43.204.147.56</b>:8080/job/Prod/configure</Url>
            <IconButton aria-label="Bookmark"><MdStarBorder size={40} /></IconButton>
          </Address>
          <IconButton aria-label="Side panel"><PanelIcon /></IconButton>
          <Avatar aria-label="Profile">V</Avatar>
          <UpdateButton>Finish update<DotsIcon /></UpdateButton>
        </Toolbar>

        <Breadcrumbs>
          <a href="#">Dashboard</a><Chevron /><a href="#">Prod</a><Chevron /><a href="#">Configuration</a>
        </Breadcrumbs>

        <Page>
          <Sidebar>
            <PageTitle>Configure</PageTitle>
            <SideList>
              {sections.map(([name, icon]) => (
                <li key={name}><SideLink href="#" $active={name === "Build Environment"}>{icon}{name}</SideLink></li>
              ))}
            </SideList>
          </Sidebar>
          <Content>
            <Section $first>
              <Option label="GitHub hook trigger for GITScm polling" help checked />
              <Option label="Poll SCM" help />
            </Section>
            <Section>
              <SectionTitle>Build Environment</SectionTitle>
              {environment.map((o) => <Option key={o.label} {...o} />)}
            </Section>
            <Section>
              <SectionTitle>Build Steps</SectionTitle>
              <StepCard>
                <StepHead>
                  <DragIcon />
                  <h3>Execute shell</h3>
                  <Help aria-label="Help for Execute shell">?</Help>
                  <RemoveButton aria-label="Remove step"><RemoveIcon /></RemoveButton>
                </StepHead>
                <FieldLabel>Command</FieldLabel>
                <FieldHint>See <a href="#">the list of available environment variables</a></FieldHint>
              </StepCard>
            </Section>
          </Content>
        </Page>
        <ActionBar>
          <ActionButton $primary>Save</ActionButton>
          <ActionButton>Apply</ActionButton>
        </ActionBar>
      </Browser>

      <Dock>
        <DockGroup items={dockLeft} />
        <DockRule />
        <DockGroup items={dockMiddle} />
        <DockRule />
        <DockGroup items={dockRight} />
      </Dock>
    </Desktop>
  );
}
